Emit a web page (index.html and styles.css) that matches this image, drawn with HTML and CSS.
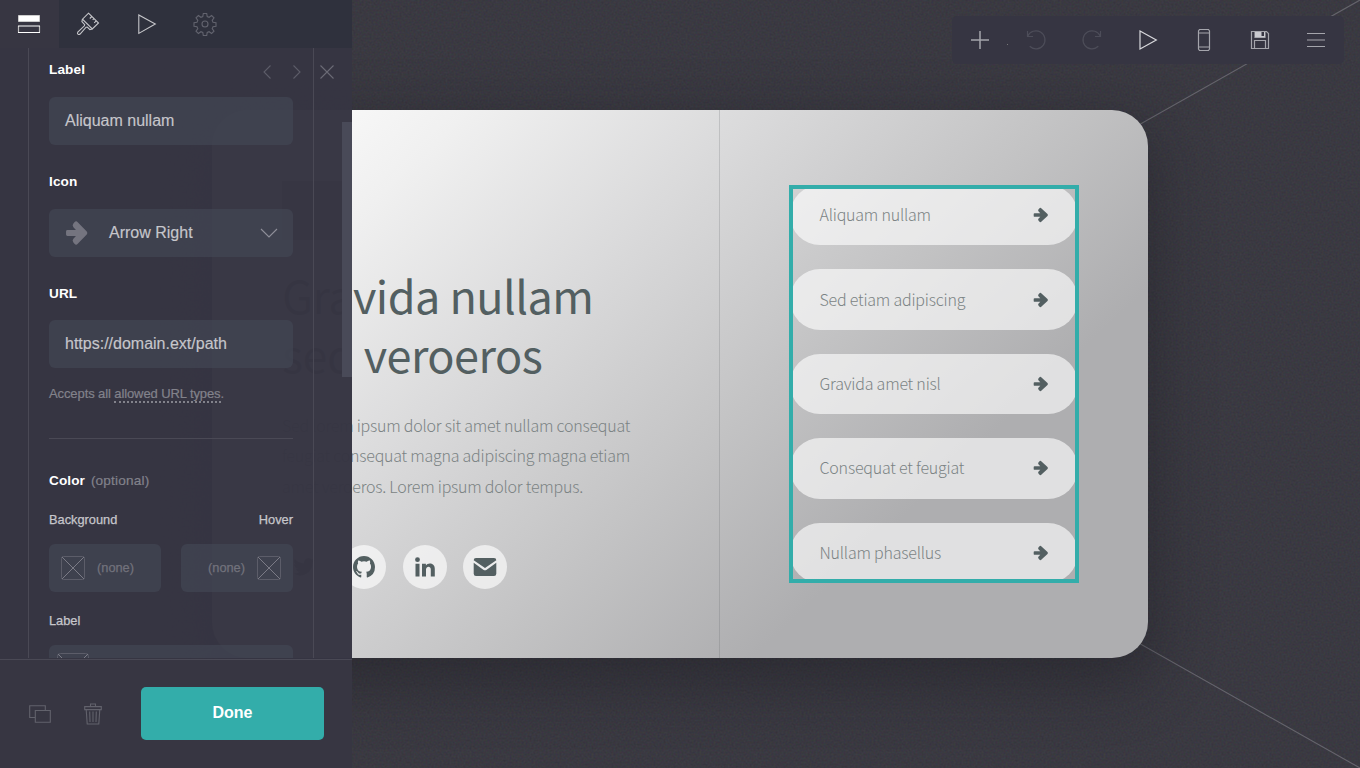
FILE: index.html
```
<!DOCTYPE html>
<html lang="en">
<head>
<meta charset="utf-8">
<title>Site builder</title>
<link rel="stylesheet" href="styles.css">
</head>
<body>
<main class="canvas">
  <svg class="backdrop" width="1360" height="768" viewBox="0 0 1360 768">
    <filter id="grain" x="0" y="0" width="100%" height="100%" color-interpolation-filters="sRGB">
      <feTurbulence type="fractalNoise" baseFrequency="0.5" numOctaves="2" seed="4"/>
      <feColorMatrix type="matrix" values="0.5 0 0 0 -0.02  0 0.5 0 0 -0.02  0 0 0.5 0 0.01  0 0 0 0 0.14"/>
    </filter>
    <rect width="1360" height="768" filter="url(#grain)"/>
    <path d="M0 0L1360 768M1360 0L0 768" stroke="#65646c" stroke-width="1.1"/>
  </svg>
  <article class="card">
    <section class="intro">
      <div class="badge"></div>
      <h1 class="title">Gravida nullam<br>sed veroeros</h1>
      <p class="copy">Sed lorem ipsum dolor sit amet nullam consequat<br>feugiat consequat magna adipiscing magna etiam<br>amet veroeros. Lorem ipsum dolor tempus.</p>
      <div class="socials">
        <a class="social"><svg width="24" height="24" viewBox="0 0 24 24"><path d="M23 5a9 9 0 0 1-2.600.8A4.500 4.500 0 0 0 22.300 3.200a9 9 0 0 1-2.800 1.100A4.500 4.500 0 0 0 12 8.300 12.500 12.500 0 0 1 2.800 3.700a4.500 4.500 0 0 0 1.400 6 4.400 4.400 0 0 1-2-.6 4.500 4.500 0 0 0 3.500 4.500 4.400 4.400 0 0 1-2 .1 4.500 4.500 0 0 0 4.200 3.100A9 9 0 0 1 1.200 18.500 12.700 12.700 0 0 0 20.700 7.200 9 9 0 0 0 23 5z"/></svg></a>
        <a class="social"><svg width="22" height="22" viewBox="0 0 16 16"><path d="M8 0C3.580 0 0 3.580 0 8c0 3.540 2.290 6.530 5.470 7.590.4.070.55-.17.55-.38 0-.19-.01-.82-.01-1.490-2.010.37-2.530-.49-2.690-.94-.09-.23-.48-.94-.82-1.130-.28-.15-.68-.52-.01-.53.63-.01 1.080.58 1.230.82.72 1.210 1.870.87 2.330.66.070-.52.28-.87.51-1.070-1.780-.2-3.640-.89-3.640-3.950 0-.87.31-1.590.82-2.150-.08-.2-.36-1.020.08-2.120 0 0 .67-.21 2.200.82a7.400 7.400 0 0 1 4 0c1.530-1.040 2.200-.82 2.200-.82.44 1.100.16 1.920.08 2.120.51.56.82 1.270.82 2.150 0 3.070-1.870 3.750-3.650 3.950.29.25.54.73.54 1.480 0 1.070-.01 1.930-.01 2.200 0 .21.15.46.55.38A8 8 0 0 0 16 8c0-4.420-3.580-8-8-8z"/></svg></a>
        <a class="social"><svg width="20" height="20" viewBox="0 0 20 20"><circle cx="2.500" cy="2.700" r="2.400"/><path d="M.5 6.700h4V19.400h-4zM7 6.700h3.900v1.700c1.700-3 8.900-3 8.900 3.300v7.700h-4V12.600c0-4.200-4.800-3.600-4.800 0v6.800H7z"/></svg></a>
        <a class="social"><svg width="24" height="20" viewBox="0 0 24 20"><path d="M3 1h18a2.300 2.300 0 0 1 2.300 2.300L12 10.900.7 3.300A2.300 2.300 0 0 1 3 1zM.7 5.800l9.600 7q1.700 1 3.400 0l9.600-7v11A2.300 2.300 0 0 1 21 19H3A2.300 2.300 0 0 1 .7 16.800z"/></svg></a>
      </div>
    </section>
    <section class="links">
      <nav class="selection">
        <a class="pill"><span>Aliquam nullam</span><svg width="16" height="16" viewBox="0 0 16 16"><use href="#arrow"/></svg></a>
        <a class="pill"><span>Sed etiam adipiscing</span><svg width="16" height="16" viewBox="0 0 16 16"><use href="#arrow"/></svg></a>
        <a class="pill"><span>Gravida amet nisl</span><svg width="16" height="16" viewBox="0 0 16 16"><use href="#arrow"/></svg></a>
        <a class="pill"><span>Consequat et feugiat</span><svg width="16" height="16" viewBox="0 0 16 16"><use href="#arrow"/></svg></a>
        <a class="pill"><span>Nullam phasellus</span><svg width="16" height="16" viewBox="0 0 16 16"><use href="#arrow"/></svg></a>
      </nav>
    </section>
  </article>
</main>

<svg class="defs" width="0" height="0">
  <symbol id="arrow" viewBox="0 0 16 16"><path d="M1.600 6.200h5.700L5.600 4.400a1.600 1.600 0 0 1 0-2.200L6.300 1.400a1.500 1.500 0 0 1 2.200 0l6 5.700a1.300 1.300 0 0 1 0 1.800l-6 5.700a1.500 1.500 0 0 1-2.200 0l-.7-.8a1.600 1.600 0 0 1 0-2.200L7.300 9.800H1.600a.9.900 0 0 1-.9-.9V7.100a.9.900 0 0 1 .9-.9z"/></symbol>
</svg>

<aside class="sidebar">
  <div class="tabs">
    <a class="tab active"><svg width="24" height="24" viewBox="0 0 24 24"><path d="M1.500 3.500h21v6h-21z" fill="#fff" stroke="#ccc"/><path d="M1.500 14v6.500M22.500 14v6.500" stroke="#bbb" stroke-width="1.200"/><path d="M1 14h22M1 20.500h22" stroke="#fff" stroke-width="1.200"/></svg></a>
    <a class="tab"><svg width="24" height="24" viewBox="0 0 24 24"><g class="stroke bright"><path d="M12.500 1.200L22.500 11l-6.200 6L6.500 7.200zM15.800 4.500l-2 2M18 6.600l-1.300 1.300M20.200 8.800l-2 2"/><path d="M6.500 7.200l-.6 2.400 2.800 3-.3 1.200-6.600 6.300q-.8 1.500.3 2.200 1 .6 2-.3l6-6.800 1.200-.2 2.600 2.600 2.400-.6"/></g></svg></a>
    <a class="tab"><svg width="24" height="24" viewBox="0 0 24 24"><path class="stroke bright" d="M3.800 3v18.400L20.300 12z"/></svg></a>
    <a class="tab"><svg width="24" height="24" viewBox="0 0 24 24"><g class="stroke dim"><circle cx="12" cy="12" r="3"/><path d="M10.300 1.500h3.400l.5 3 1.900.8 2.500-1.800 2.400 2.400-1.800 2.500.8 1.900 3 .5v3.400l-3 .5-.8 1.900 1.800 2.500-2.400 2.400-2.500-1.800-1.900.8-.5 3h-3.400l-.5-3-1.900-.8-2.500 1.800L3 19.100l1.800-2.500-.8-1.900-3-.5v-3.400l3-.5.8-1.900L3 5.900l2.400-2.400 2.500 1.800 1.900-.8z"/></g></svg></a>
  </div>

  <div class="scroller">
    <div class="pager">
      <svg width="8" height="14" viewBox="0 0 8 14"><path class="stroke faint" d="M7.500.5L1 7l6.500 6.500"/></svg>
      <svg width="8" height="14" viewBox="0 0 8 14"><path class="stroke faint" d="M.5.5L7 7 .5 13.500"/></svg>
      <svg width="14" height="14" viewBox="0 0 14 14"><path class="stroke mid" d="M.5.5l13 13M13.500.5l-13 13"/></svg>
    </div>
    <div class="thumb"></div>
    <div class="form">
      <div class="label">Label</div>
      <div class="field">Aliquam nullam</div>
      <div class="label">Icon</div>
      <div class="field">
        <svg class="field-icon" width="24" height="26" viewBox="0 0 16 16" preserveAspectRatio="none"><use href="#arrow"/></svg>
        <span>Arrow Right</span>
        <svg class="chevron" width="18" height="10" viewBox="0 0 18 10"><path class="stroke" d="M1 1l8 8 8-8"/></svg>
      </div>
      <div class="label url">URL</div>
      <div class="field">https://domain.ext/path</div>
      <p class="help">Accepts all <a class="help-link">allowed URL types</a>.</p>
      <div class="label color">Color <span class="optional">(optional)</span></div>
      <div class="sublabels"><span>Background</span><span>Hover</span></div>
      <div class="swatches">
        <div class="swatch"><svg width="24" height="24" viewBox="0 0 24 24"><rect class="box" x=".5" y=".5" width="23" height="23" rx="2"/><path class="cross" d="M1 1l22 22M23 1L1 23"/></svg><span>(none)</span></div>
        <div class="swatch end"><span>(none)</span><svg width="24" height="24" viewBox="0 0 24 24"><rect class="box" x=".5" y=".5" width="23" height="23" rx="2"/><path class="cross" d="M1 1l22 22M23 1L1 23"/></svg></div>
      </div>
      <div class="sublabels last"><span>Label</span></div>
      <div class="field tall"><svg width="32" height="32" viewBox="0 0 32 32"><rect class="box" x=".5" y=".5" width="31" height="31" rx="3"/><path class="cross" d="M1 1l30 30M31 1L1 31"/></svg></div>
    </div>
  </div>

  <div class="footer">
    <svg width="22" height="18" viewBox="0 0 22 18"><path class="stroke action" d="M6 12.500H.7V.7h15.600v4.600M6.300 5.500h15v11.800h-15z"/></svg>
    <svg class="trash" width="18" height="22" viewBox="0 0 18 22"><path class="stroke action" d="M.7 3.600h16.600v3H.7zM6.500 3.500V1h5v2.500M2.200 6.600l1 14.400h11.600l1-14.400M5.700 8.500l.3 10.500M9 8.500V19M12.300 8.500L12 19"/></svg>
    <button class="done">Done</button>
  </div>
</aside>

<div class="toolbar">
  <svg width="24" height="24" viewBox="0 0 24 24"><path class="tool plus" d="M12 3v18M3 12h18"/></svg>
  <svg width="24" height="24" viewBox="0 0 24 24"><path class="tool off" d="M3.500 3v5.500H9M3.700 8.300a9 9 0 1 1 2 10"/></svg>
  <svg width="24" height="24" viewBox="0 0 24 24"><path class="tool off" d="M20.500 3v5.500H15M20.300 8.300a9 9 0 1 0-2 10"/></svg>
  <svg width="24" height="24" viewBox="0 0 24 24"><path class="tool on" d="M4 3v18L20.300 12z"/></svg>
  <svg width="24" height="24" viewBox="0 0 24 24"><path class="tool" d="M7.500 1.500h9l1 1.500v18l-1 1.500h-9l-1-1.500V3zM6.500 5h11M6.500 19h11"/></svg>
  <svg width="24" height="24" viewBox="0 0 24 24"><path class="tool" d="M3.500 3.500h15l2 2v15h-17zM7 3.500v6h10v-6M6.500 20.500v-8h11v8"/><path fill="#c9c9cf" d="M7 4h6.500v4H16V4h1v5H7z"/></svg>
  <svg width="24" height="24" viewBox="0 0 24 24"><path class="tool" d="M3 5.500h18M3 12h18M3 18.500h18"/></svg>
  <i class="dot"></i>
</div>
</body>
</html>
```
FILE: styles.css
```
* { box-sizing: border-box; }
body { margin: 0; width: 1360px; height: 768px; overflow: hidden; background: #3a3941; font-family: "Liberation Sans", Arial, sans-serif; }
svg { display: block; flex: none; }
.defs { position: absolute; }

.canvas { position: relative; height: 768px; display: flex; justify-content: center; padding-top: 110px; }
.backdrop { position: absolute; inset: 0; }
.card { position: relative; width: 936px; height: 548px; border-radius: 36px; display: flex;
  background: linear-gradient(137deg, #fff 0%, #f0f0f0 17%, #dadadb 36%, #c3c3c4 56%, #aeaeb0 74%, #aeaeb0 100%);
  box-shadow: 0 20px 60px 5px rgba(20, 20, 25, .38);
  font-family: "Noto Sans CJK SC", sans-serif; }
.intro { width: 508px; padding: 71px 0 0 70px; border-right: 1px solid rgba(90, 95, 100, .22); }
.badge { width: 69px; height: 59px; background: #777; }
.title { margin: 25px 0 0; font-size: 45px; line-height: 59px; font-weight: 400; letter-spacing: -.54px; color: #535f61; white-space: nowrap; }
.copy { margin: 26.500px 0 0; font-size: 16px; line-height: 30.500px; font-weight: 300; letter-spacing: -.23px; color: #7b8384; white-space: nowrap; }
.socials { display: flex; gap: 16.500px; margin: 43.500px 0 0 -.5px; }
.social { width: 44px; height: 44px; border-radius: 50%; background: rgba(255, 255, 255, .63); display: flex; align-items: center; justify-content: center; fill: #535f61; }
.links { flex: 1; padding: 75px 69px 0; }
.selection { position: relative; height: 398px; overflow: hidden; display: flex; flex-direction: column; gap: 24px; padding: 0 1px; }
.selection::after { content: ""; position: absolute; inset: 0; border: 4px solid #33adaa; }
.pill { height: 60.400px; flex: none; border-radius: 30.200px; background: rgba(255, 255, 255, .62); padding: 0 29px 0 29.500px; display: flex; align-items: center; justify-content: space-between; font-size: 16px; font-weight: 300; letter-spacing: -.21px; color: #7b8384; fill: #535f61; }
.pill span { margin-top: -2px; }

.sidebar { position: absolute; left: 0; top: 0; width: 352px; height: 768px; display: flex; flex-direction: column; background: rgba(54, 53, 66, .985); }
.tabs { height: 48px; display: flex; background: #2f313d; }
.tab { width: 58.700px; display: flex; align-items: center; justify-content: center; }
.tab.active { background: #373642; }
.stroke { fill: none; stroke: #8f8f99; stroke-width: 1.100; }
.stroke.bright, .bright .stroke { stroke: #c6c6ca; }
.stroke.dim { stroke: #62636e; }
.stroke.faint { stroke: #5d5d69; }
.stroke.mid { stroke: #6b6b76; }
.stroke.action { stroke: #62626c; }
.scroller { position: relative; height: 610px; overflow: hidden; padding: 0 38px 0 28px; }
.pager { position: absolute; left: 263px; top: 17px; display: flex; gap: 22px; }
.pager svg:last-child { margin-left: -3px; }
.thumb { position: absolute; right: 0; top: 74px; width: 10px; height: 255px; background: #494a58; }
.form { height: 610px; border: 1px solid #4a4955; border-width: 0 1px; padding: 13px 20px 0; }
.label { height: 16px; line-height: 17px; font-size: 13.600px; font-weight: 700; color: #fff; white-space: nowrap; letter-spacing: .1px; }
.field { height: 48px; margin: 20px 0 28px; border-radius: 6px; background: rgba(68, 73, 86, .6); padding: 0 15px 0 16px; display: flex; align-items: center; font-size: 16px; color: #c6c6cb; -webkit-text-stroke: .15px; }
.field-icon { fill: #74747f; margin-right: 20px; }
.chevron { margin-left: auto; }
.label.url + .field { margin: 19px 0 0; }
.help { margin: 18px 0 0; height: 53px; border-bottom: 1px solid #4a4955; font-size: 13px; line-height: 16px; letter-spacing: -.1px; color: #82828b; -webkit-text-stroke: .2px; }
.help-link { border-bottom: 2px dotted #82828b; display: inline-block; height: 17px; }
.label.color { margin-top: 34px; line-height: 15px; }
.optional { font-weight: 400; font-size: 13.600px; letter-spacing: .2px; margin-left: 2px; color: #82828b; -webkit-text-stroke: .2px; }
.sublabels { display: flex; justify-content: space-between; margin-top: 23px; line-height: 16px; font-size: 12.800px; color: #c6c6cb; -webkit-text-stroke: .25px; }
.swatches { display: flex; gap: 20px; margin-top: 16px; }
.swatch { flex: 1; height: 48px; border-radius: 6px; background: rgba(68, 73, 86, .6); padding: 0 12px; display: flex; align-items: center; gap: 12px; font-size: 12.800px; color: #72727c; -webkit-text-stroke: .25px; }
.swatch span { margin-top: -2px; }
.swatch.end { justify-content: flex-end; }
.sublabels.last { margin-top: 21px; }
.field.tall { margin: 16px 0 0; padding: 8px; align-items: flex-start; }
.box { fill: none; stroke: #5c5d69; }
.cross { fill: none; stroke: #7b7b86; }
.footer { margin-top: 1px; height: 109px; border-top: 1px solid #4a4955; display: flex; align-items: center; padding: 0 28px 0 29px; background: #373642; }
.trash { margin-left: 33px; }
.done { margin: -2px 0 0 auto; width: 183px; height: 53px; border: 0; border-radius: 5px; background: #33adaa; color: #fff; font: 700 16px "Liberation Sans", Arial, sans-serif; }

.toolbar { position: absolute; left: 952px; top: 16px; width: 392px; height: 48px; border-radius: 5px; background: #363542; display: flex; align-items: center; justify-content: space-between; padding: 0 16px; }
.tool { fill: none; stroke: #a5a5ac; stroke-width: 1.200; }
.tool.plus { stroke-width: 1.500; }
.tool.off { stroke: #4d4d59; }
.tool.on { stroke: #d8d8dc; }
.dot { position: absolute; left: 55px; top: 28px; width: 1px; height: 1px; background: #777; }
```
